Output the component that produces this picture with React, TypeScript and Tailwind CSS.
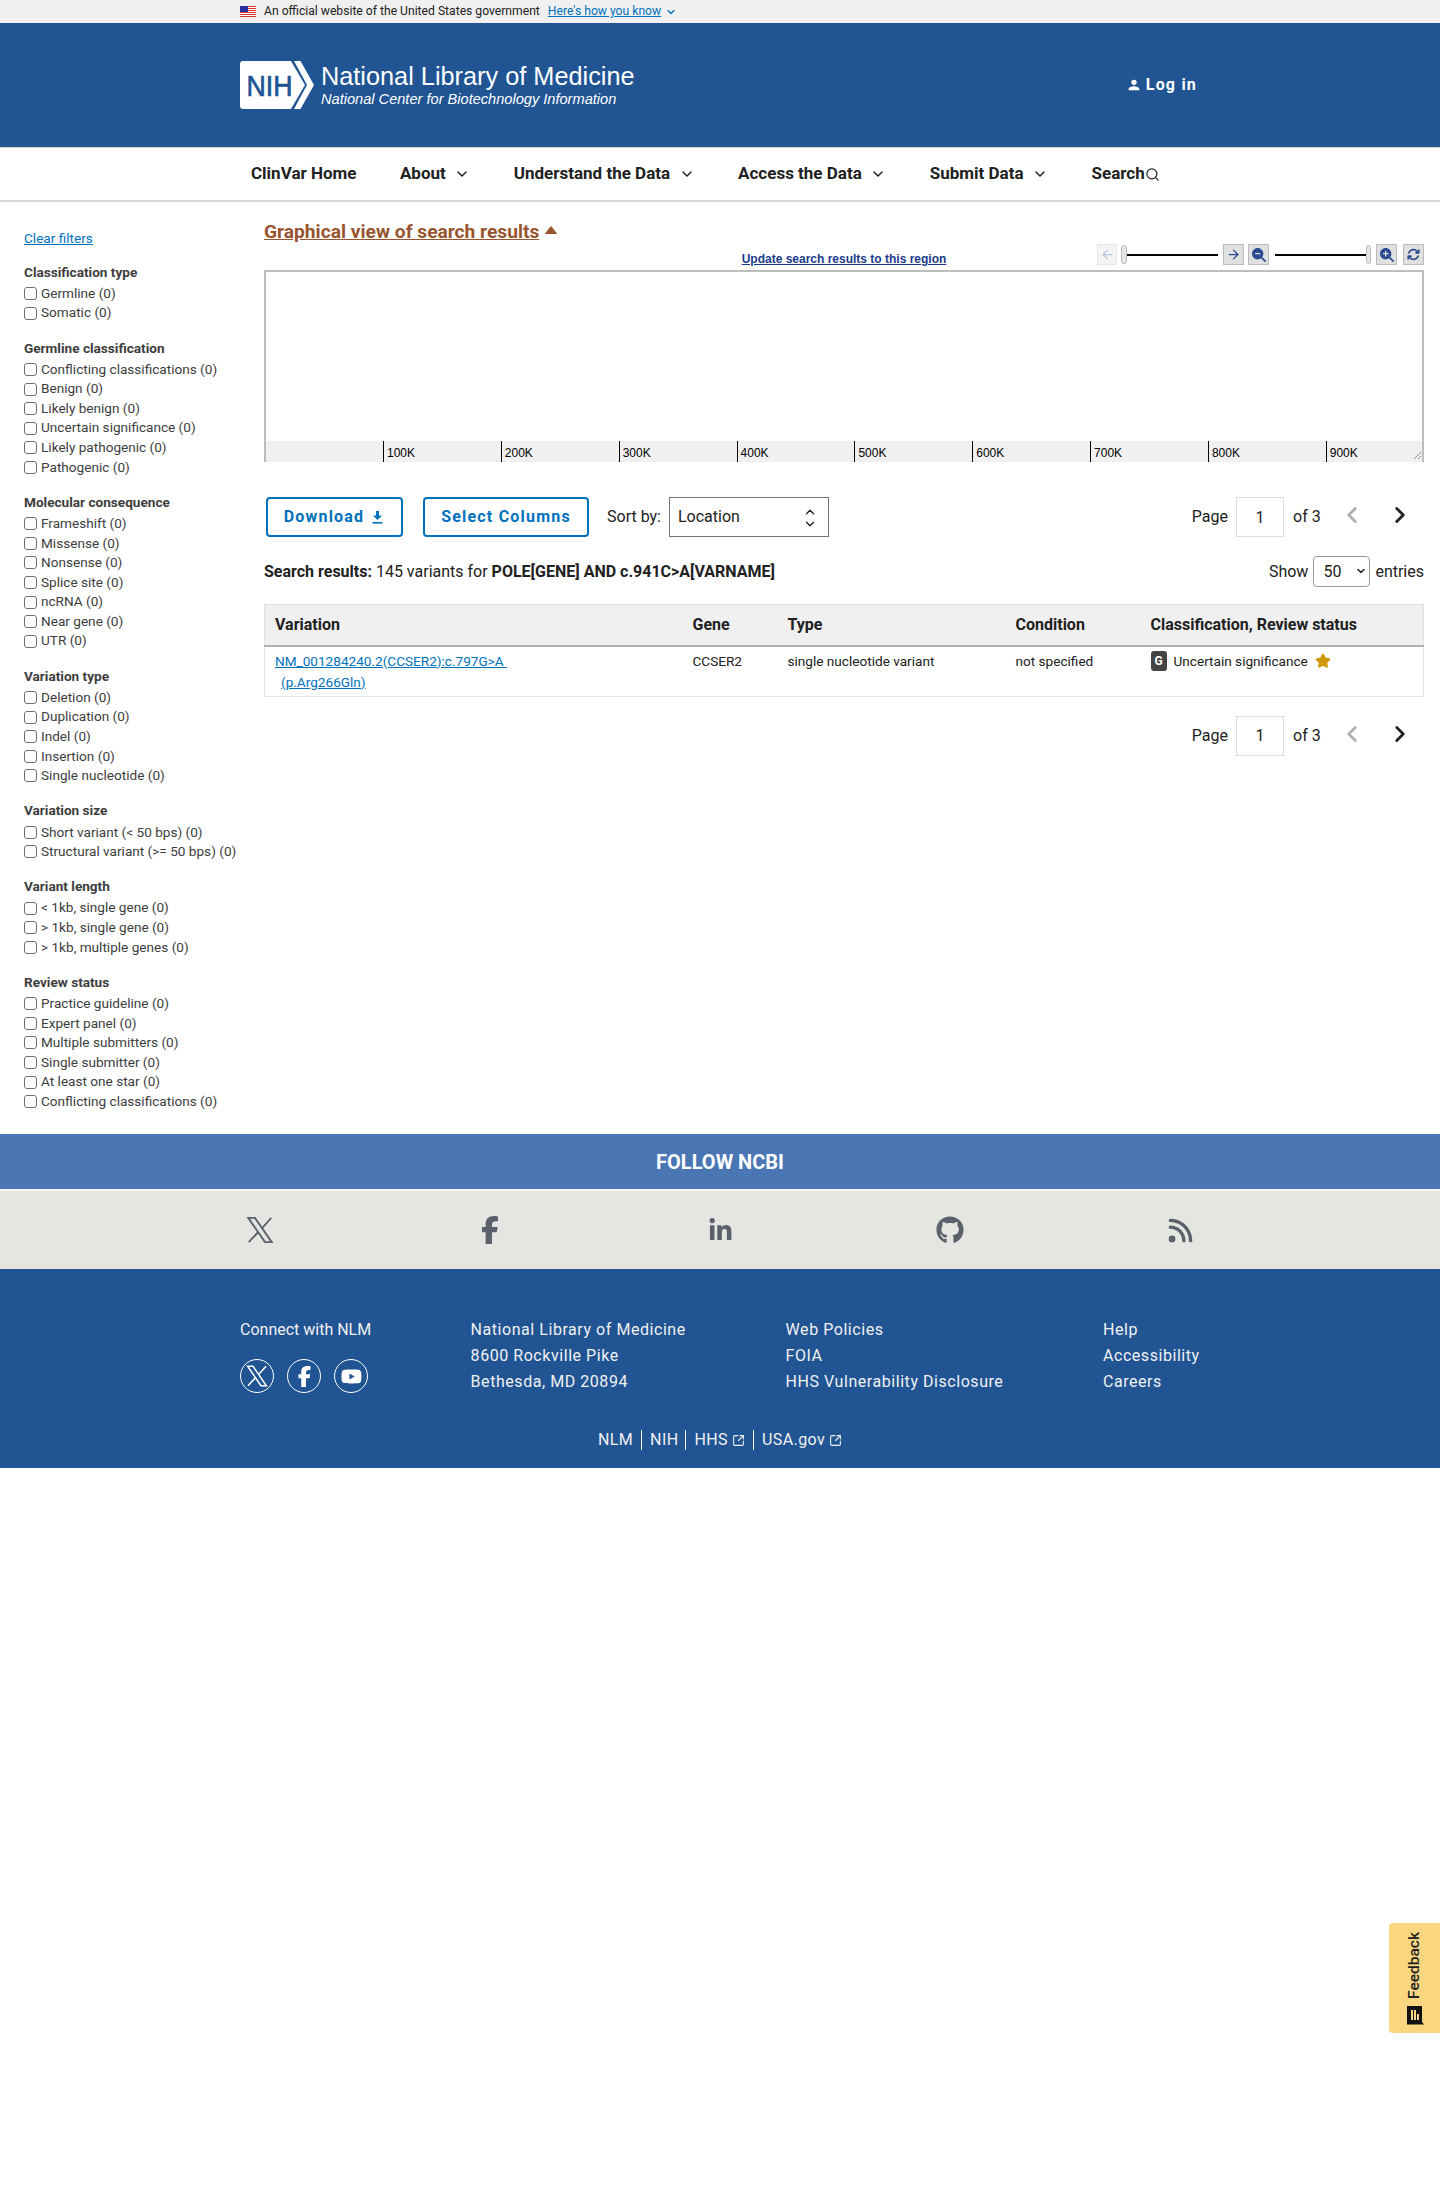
import React from 'react';
import { ChevronDown, ChevronUp, ChevronLeft, ChevronRight, Search, ArrowLeft, ArrowRight, Star, SquareArrowOutUpRight } from 'lucide-react';
import { FaFacebookF, FaLinkedinIn, FaGithub, FaRss, FaYoutube, FaMagnifyingGlassMinus, FaMagnifyingGlassPlus, FaArrowsRotate } from 'react-icons/fa6';

const filterGroups = [
  { title: 'Classification type', items: ['Germline (0)', 'Somatic (0)'] },
  {
    title: 'Germline classification',
    items: ['Conflicting classifications (0)', 'Benign (0)', 'Likely benign (0)', 'Uncertain significance (0)', 'Likely pathogenic (0)', 'Pathogenic (0)'],
  },
  {
    title: 'Molecular consequence',
    items: ['Frameshift (0)', 'Missense (0)', 'Nonsense (0)', 'Splice site (0)', 'ncRNA (0)', 'Near gene (0)', 'UTR (0)'],
  },
  { title: 'Variation type', items: ['Deletion (0)', 'Duplication (0)', 'Indel (0)', 'Insertion (0)', 'Single nucleotide (0)'] },
  { title: 'Variation size', items: ['Short variant (< 50 bps) (0)', 'Structural variant (>= 50 bps) (0)'] },
  { title: 'Variant length', items: ['< 1kb, single gene (0)', '> 1kb, single gene (0)', '> 1kb, multiple genes (0)'] },
  {
    title: 'Review status',
    items: ['Practice guideline (0)', 'Expert panel (0)', 'Multiple submitters (0)', 'Single submitter (0)', 'At least one star (0)', 'Conflicting classifications (0)'],
  },
];

const navItems = [
  { label: 'ClinVar Home', menu: false },
  { label: 'About', menu: true },
  { label: 'Understand the Data', menu: true },
  { label: 'Access the Data', menu: true },
  { label: 'Submit Data', menu: true },
];

const ticks = ['100K', '200K', '300K', '400K', '500K', '600K', '700K', '800K', '900K'];

const Flag = () => (
  <svg width="16" height="11" viewBox="0 0 16 11">
    <rect width="16" height="11" fill="#fff" />
    {[0, 2, 4, 6, 8, 10].map((y) => (
      <rect key={y} y={y} width="16" height="1" fill="#d8342c" />
    ))}
    <rect width="8" height="6" fill="#2b2f9e" />
  </svg>
);

const NihLogo = () => (
  <svg width="74" height="48" viewBox="0 0 74 48" className="shrink-0">
    <path d="M3 0H51L65 24L51 48H3A3 3 0 0 1 0 45V3A3 3 0 0 1 3 0Z" fill="#fff" />
    <polygon points="54,0 60.5,0 74,24 60.5,48 54,48 67,24" fill="#fff" />
    <text x="6.5" y="35" fontSize="30" fill="#205493" stroke="#205493" strokeWidth="0.7" textLength="46" lengthAdjust="spacingAndGlyphs" fontFamily="'Liberation Sans', sans-serif">
      NIH
    </text>
  </svg>
);

// the X logo as the site draws it: a hollow thick bar and a thin cross line
const XLogo = ({ size }: { size: number }) => (
  <svg width={size} height={size} viewBox="0 0 24 24" fill="none" stroke="currentColor" strokeWidth="1.5">
    <path d="M2.6 2.3H8L21.4 21.7H16Z" />
    <path d="M21 2.3L13.4 10.8M10.6 13.6L3 21.7" />
  </svg>
);

const Pager = () => (
  <div className="flex items-center text-[16px] text-[#212121]">
    <span>Page</span>
    <input readOnly value="1" className="ml-[8px] h-[40px] w-[48px] border border-[#dcdee0] bg-white text-center text-[16px]" />
    <span className="ml-[9px] w-[35px]">of 3</span>
    <div className="-mt-[4px] flex">
      <span className="flex w-[48px] justify-center text-[#aeb0b5]">
        <ChevronLeft size={26} strokeWidth={2.6} />
      </span>
      <span className="flex w-[48px] justify-center text-[#212121]">
        <ChevronRight size={26} strokeWidth={2.6} />
      </span>
    </div>
  </div>
);

const ToolButton = ({ children, disabled }: { children: React.ReactNode; disabled?: boolean }) => (
  <span
    className={
      disabled
        ? 'flex h-[21px] w-[20px] items-center justify-center border border-[#e6e6e6] bg-[#f4f4f4] text-[#b9c4de]'
        : 'flex h-[21px] w-[21px] items-center justify-center border border-[#bbbbbb] bg-[#e0e0e0] text-[#2c4a90]'
    }
  >
    {children}
  </span>
);

const App = () => {
  return (
    <div className="relative min-h-[2200px] bg-white font-['Roboto',sans-serif] text-[#212121]">
      {/* gov banner */}
      <div className="flex h-[23px] items-center bg-[#f0f0f0] pl-[240px] text-[12.15px]">
        <Flag />
        <span className="ml-[8px]">An official website of the United States government</span>
        <a className="ml-[8px] text-[#0071bc] underline">Here's how you know</a>
        <ChevronDown size={12} strokeWidth={2.6} className="ml-[4px] text-[#0071bc]" />
      </div>

      {/* header */}
      <header className="flex h-[124px] items-center justify-between bg-[#205493] pl-[240px] pr-[243px] text-white">
        <div className="flex items-center">
          <NihLogo />
          <div className="ml-[7px] font-['Liberation_Sans',sans-serif]">
            <div className="text-[25.3px] leading-[28px]">National Library of Medicine</div>
            <div className="text-[14.6px] italic leading-[18px]">National Center for Biotechnology Information</div>
          </div>
        </div>
        <a className="flex items-center text-[16px] font-bold tracking-[1.2px]">
          <svg width="16" height="16" viewBox="0 0 24 24" fill="currentColor">
            <path d="M12 12a4 4 0 1 0 0-8 4 4 0 0 0 0 8zm0 2c-2.67 0-8 1.34-8 4v2h16v-2c0-2.66-5.33-4-8-4z" />
          </svg>
          <span className="ml-[4px]">Log in</span>
        </a>
      </header>

      {/* nav */}
      <nav className="flex h-[55px] items-center gap-[43.5px] border-t border-b-2 border-t-[#d6d7d9] border-b-[#d6d7d9] pl-[251px] text-[17px] font-bold">
        {navItems.map((item) => (
          <a key={item.label} className="flex items-center gap-[8.5px]">
            {item.label}
            {item.menu && <ChevronDown size={16} strokeWidth={2.2} />}
          </a>
        ))}
        <a className="flex items-center">
          Search
          <Search size={15} strokeWidth={2} />
        </a>
      </nav>

      <div className="flex">
        {/* filters */}
        <aside className="w-[264px] shrink-0 pl-[24px] pt-[27px] text-[13.6px] leading-[19.6px] text-[#3d3d3d]">
          <a className="text-[#0071bc] underline">Clear filters</a>
          <div className="mt-[14px] flex flex-col gap-[15.65px]">
            {filterGroups.map((group) => (
              <div key={group.title}>
                <div className="mb-[1.5px] font-bold">{group.title}</div>
                {group.items.map((label, i) => (
                  <label key={group.title + i} className="flex items-center">
                    <input type="checkbox" className="h-[13px] w-[13px] appearance-none rounded-[3px] border border-[#6f6f6f] bg-white" />
                    <span className="ml-[4px]">{label}</span>
                  </label>
                ))}
              </div>
            ))}
          </div>
        </aside>

        {/* main */}
        <main className="w-[1160px] pt-[17px]">
          <h2 className="flex h-[25px] items-center text-[19.2px] font-bold leading-[25px] text-[#98542e]">
            <a className="underline">Graphical view of search results</a>
            <svg width="12" height="8" viewBox="0 0 12 8" className="ml-[6px] -mt-[4px]">
              <path d="M6 0.5L11.5 7.5H0.5Z" fill="#98542e" stroke="#98542e" strokeLinejoin="round" />
            </svg>
          </h2>

          <div className="grid h-[21px] grid-cols-[1fr_auto_1fr] items-end">
            <div />
            <a className="-mb-[1px] font-['Liberation_Sans',sans-serif] text-[12px] font-bold leading-[14px] text-[#1a3a8a] underline">
              Update search results to this region
            </a>
            <div className="flex items-center justify-end">
              <ToolButton disabled>
                <ArrowLeft size={15} strokeWidth={2} />
              </ToolButton>
              <span className="ml-[4px] h-[19px] w-[6px] rounded-full border border-[#bbbbbb] bg-[#e6e6e6]" />
              <span className="h-[2px] w-[91px] bg-black" />
              <span className="ml-[5px]">
                <ToolButton>
                  <ArrowRight size={15} strokeWidth={2} />
                </ToolButton>
              </span>
              <span className="ml-[4px]">
                <ToolButton>
                  <FaMagnifyingGlassMinus size={14} />
                </ToolButton>
              </span>
              <span className="ml-[6px] h-[2px] w-[91px] bg-black" />
              <span className="h-[19px] w-[5px] rounded-full border border-[#bbbbbb] bg-[#e6e6e6]" />
              <span className="ml-[5px]">
                <ToolButton>
                  <FaMagnifyingGlassPlus size={14} />
                </ToolButton>
              </span>
              <span className="ml-[6px]">
                <ToolButton>
                  <FaArrowsRotate size={13} />
                </ToolButton>
              </span>
            </div>
          </div>

          <div className="relative mt-[5px] h-[192px] border-2 border-[#bdbdbd] bg-white pt-[169px]">
            <div className="flex h-[21px] bg-[#f0f0f0] pl-[117px] font-['Liberation_Sans',sans-serif] text-[12px] leading-[14px] text-black">
              {ticks.map((t) => (
                <div key={t} className="w-[117.85px] shrink-0 border-l border-black pl-[3px] pt-[5px]">
                  {t}
                </div>
              ))}
            </div>
            <svg width="8" height="8" viewBox="0 0 8 8" className="absolute bottom-[1px] right-[1px]">
              <path d="M1 8L8 1M5 8L8 5" stroke="#777" strokeWidth="0.8" />
            </svg>
          </div>

          {/* toolbar */}
          <div className="mt-[35px] flex h-[40px] items-center pl-[2px] text-[16px]">
            <button className="flex h-[40px] w-[137px] items-center justify-center gap-[8px] rounded-[4px] border-2 border-[#0071bc] pr-[2px] text-[16px] font-bold tracking-[1.2px] text-[#0071bc]">
              Download
              <svg width="11" height="13" viewBox="0 0 11 13" fill="currentColor">
                <path d="M4 0H7V4.5H10L5.5 9L1 4.5H4Z" />
                <rect x="0.5" y="11" width="10" height="1.6" />
              </svg>
            </button>
            <button className="ml-[20px] h-[40px] w-[166px] rounded-[4px] border-2 border-[#0071bc] text-[16px] font-bold tracking-[1.2px] text-[#0071bc]">
              Select Columns
            </button>
            <span className="ml-[18px]">Sort by:</span>
            <div className="relative ml-[8px]">
              <select className="h-[40px] w-[160px] appearance-none border border-[#757575] bg-white pl-[8px] text-[16px]">
                <option>Location</option>
              </select>
              <div className="pointer-events-none absolute right-[12px] top-[8px] flex flex-col">
                <ChevronUp size={14} strokeWidth={2.4} className="-mb-[2px]" />
                <ChevronDown size={14} strokeWidth={2.4} />
              </div>
            </div>
            <div className="ml-auto">
              <Pager />
            </div>
          </div>

          <div className="mt-[19px] flex h-[31px] items-center justify-between text-[16px]">
            <div>
              <b>Search results:</b> 145 variants for <b>POLE[GENE] AND c.941C&gt;A[VARNAME]</b>
            </div>
            <div className="flex items-center">
              <span>Show</span>
              <div className="relative ml-[5px]">
                <select className="h-[31px] w-[57px] appearance-none rounded-[4px] border border-[#9a9a9a] bg-white pl-[9px] text-[16px]">
                  <option>50</option>
                </select>
                <ChevronDown size={12} strokeWidth={3} className="pointer-events-none absolute right-[3px] top-[9px]" />
              </div>
              <span className="ml-[5px]">entries</span>
            </div>
          </div>

          <table className="mt-[17px] w-full table-fixed border border-[#dfe1e2] text-[13.6px]">
            <thead>
              <tr className="h-[41px] border-b-2 border-[#aeb0b5] bg-[#f0f0f0] text-left text-[16px] font-bold">
                <th className="w-[418px] pl-[10px] font-bold">Variation</th>
                <th className="w-[95px] pl-[10px] font-bold">Gene</th>
                <th className="w-[228px] pl-[10px] font-bold">Type</th>
                <th className="w-[135px] pl-[10px] font-bold">Condition</th>
                <th className="pl-[10px] font-bold">Classification, Review status</th>
              </tr>
            </thead>
            <tbody>
              <tr className="align-top leading-[21px]">
                <td className="pb-[3px] pl-[10px] pt-[4px]">
                  <a className="text-[#0071bc] underline">
                    NM_001284240.2(CCSER2):c.797G&gt;A&nbsp;
                    <br />
                    <span className="ml-[6px]">(p.Arg266Gln)</span>
                  </a>
                </td>
                <td className="pl-[10px] pt-[4px]">CCSER2</td>
                <td className="pl-[10px] pt-[4px]">single nucleotide variant</td>
                <td className="pl-[10px] pt-[4px]">not specified</td>
                <td className="pl-[10px] pt-[4px]">
                  <div className="flex items-center">
                    <span className="flex h-[20px] w-[16px] items-center justify-center rounded-[3px] bg-[#444444] text-[12px] font-bold leading-none text-white">G</span>
                    <span className="ml-[7px]">Uncertain significance</span>
                    <Star size={16} className="ml-[7px] fill-[#d0980c] text-[#d0980c]" />
                  </div>
                </td>
              </tr>
            </tbody>
          </table>

          <div className="mt-[19px] flex justify-end">
            <Pager />
          </div>
        </main>
      </div>

      {/* follow */}
      <section className="mt-[22.6px]">
        <div className="flex h-[55px] items-center justify-center bg-[#4a77b4] text-[20px] font-bold text-white">FOLLOW NCBI</div>
        <div className="flex h-[80px] items-center justify-center border-t-2 border-[#f7f7f5] bg-[#e5e6e2] text-[#5b616b]">
          <span className="flex w-[230px] justify-center">
            <XLogo size={30} />
          </span>
          <span className="flex w-[230px] justify-center">
            <FaFacebookF size={28} />
          </span>
          <span className="flex w-[230px] justify-center">
            <FaLinkedinIn size={25} />
          </span>
          <span className="flex w-[230px] justify-center">
            <FaGithub size={28} />
          </span>
          <span className="flex w-[230px] justify-center">
            <FaRss size={27} />
          </span>
        </div>
      </section>

      {/* footer */}
      <footer className="bg-[#205493] pb-[18px] pt-[48px] text-[16px] leading-[26px] text-[#f1f1f1]">
        <div className="grid grid-cols-[230.6px_315px_317.4px_1fr] pl-[240px] tracking-[0.55px]">
          <div>
            <div className="tracking-normal">Connect with NLM</div>
            <div className="mt-[16px] flex gap-[13px]">
              <span className="flex h-[34px] w-[34px] items-center justify-center rounded-full border border-white text-white">
                <XLogo size={24} />
              </span>
              <span className="flex h-[34px] w-[34px] items-center justify-center rounded-full border border-white text-white">
                <FaFacebookF size={21} />
              </span>
              <span className="flex h-[34px] w-[34px] items-center justify-center rounded-full border border-white text-white">
                <FaYoutube size={21} />
              </span>
            </div>
          </div>
          <div>
            <div>National Library of Medicine</div>
            <div>8600 Rockville Pike</div>
            <div>Bethesda, MD 20894</div>
          </div>
          <div>
            <div>Web Policies</div>
            <div>FOIA</div>
            <div>HHS Vulnerability Disclosure</div>
          </div>
          <div>
            <div>Help</div>
            <div>Accessibility</div>
            <div>Careers</div>
          </div>
        </div>
        <div className="mt-[35px] flex h-[20px] items-center justify-center leading-[20px] tracking-[0.4px]">
          <a className="pr-[8px]">NLM</a>
          <a className="border-l border-[#f1f1f1] pl-[8px] pr-[7px]">NIH</a>
          <a className="flex items-center gap-[4px] border-l border-[#f1f1f1] px-[8px]">
            HHS <SquareArrowOutUpRight size={13} />
          </a>
          <a className="flex items-center gap-[4px] border-l border-[#f1f1f1] pl-[8px]">
            USA.gov <SquareArrowOutUpRight size={13} />
          </a>
        </div>
      </footer>

      {/* feedback tab */}
      <div className="absolute right-0 top-[1923px] flex h-[110px] w-[51px] flex-col items-center justify-end rounded-l-[4px] bg-[#fad680] pb-[8px] text-[#222222]">
        <span className="rotate-180 text-[15.5px] font-medium [writing-mode:vertical-rl]">Feedback</span>
        <svg width="18" height="20" viewBox="0 0 18 20" className="mt-[6px]">
          <path d="M1 1H16V17L18 19.5H1Z" fill="#111" />
          <rect x="5" y="5" width="2" height="10" fill="#fad680" />
          <rect x="8" y="5" width="2" height="10" fill="#fad680" />
          <rect x="11" y="9" width="2" height="6" fill="#fad680" />
        </svg>
      </div>
    </div>
  );
};

export default App;
